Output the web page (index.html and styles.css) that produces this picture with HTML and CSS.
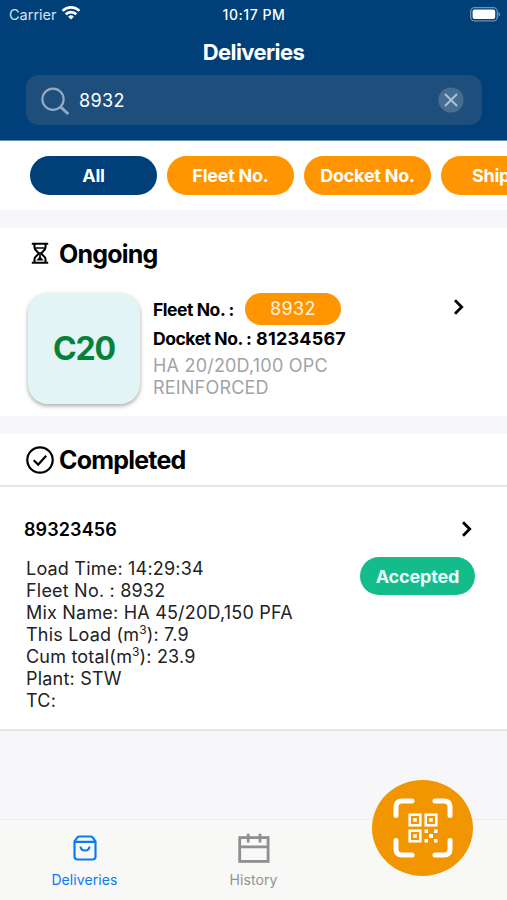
FILE: index.html
```html
<!DOCTYPE html>
<html lang="en">
<head>
<meta charset="utf-8">
<title>Deliveries</title>
<link rel="stylesheet" href="styles.css">
</head>
<body>
<div class="app">
  <header class="header">
    <div class="status">
      <div class="carrier"><span>Carrier</span>
        <svg width="20" height="16" viewBox="0 0 20 16" fill="none" stroke="#fff" stroke-width="2.7"><path d="M1.600 5.900a12 12 0 0 1 16.800 0M4.700 9.200a7.600 7.600 0 0 1 10.600 0"/><path d="M10 14.600 7.100 11.700a4.100 4.100 0 0 1 5.800 0z" fill="#fff" stroke="none"/></svg>
      </div>
      <div class="clock">10:17 PM</div>
      <svg class="battery" width="31" height="15" viewBox="0 0 31 15"><rect x=".7" y=".7" width="26.6" height="13.2" rx="4" fill="none" stroke="#6f93b5" stroke-width="1.3"/><rect x="2.6" y="2.6" width="22.6" height="9.4" rx="2" fill="#fff"/><path d="M28.500 4.800q3.200 2.500 0 5z" fill="#6f93b5"/></svg>
    </div>
    <h1 class="title">Deliveries</h1>
    <div class="search">
      <svg class="glass" width="29" height="29" viewBox="0 0 29 29" fill="none" stroke="#94aac3" stroke-width="2.2"><circle cx="12" cy="12.3" r="10.6"/><path d="m19.700 20 7.600 7" stroke-width="3"/></svg>
      <span class="query">8932</span>
      <svg class="clear" width="26" height="26" viewBox="0 0 26 26"><circle cx="13" cy="13" r="12.6" fill="#486d93"/><path d="m7 7 12 12M19 7 7 19" stroke="#b0c0d2" stroke-width="2"/></svg>
    </div>
  </header>

  <nav class="filters">
    <span class="pill active">All</span>
    <span class="pill">Fleet No.</span>
    <span class="pill">Docket No.</span>
    <span class="pill ship">Ship</span>
  </nav>

  <section class="ongoing">
    <h2 class="section-title">
      <svg class="hourglass" width="18" height="23" viewBox="0 0 18 23" fill="none" stroke="#000" stroke-width="2.1"><path d="M.8 1.800h16.400M.8 20.800h16.400M3.500 2v3.600c0 2.700 4 4.100 4 5.800s-4 3-4 5.700v3.500M14.500 2v3.600c0 2.700-4 4.100-4 5.800s4 3 4 5.700v3.500"/><path d="M4.300 6h9.400M9 10v5" stroke-width="1.600"/><path d="m5.400 18.500 3.600-4.300 3.600 4.300z" fill="#000" stroke="none"/></svg>
      <span>Ongoing</span>
    </h2>
    <div class="delivery">
      <div class="grade">C20</div>
      <div class="info">
        <div class="row"><span class="strong fleet">Fleet No. :</span><span class="tag">8932</span></div>
        <div class="strong docket">Docket No. : <span class="number">81234567</span></div>
        <div class="mix"><div>HA 20/20D,100 OPC</div><div>REINFORCED</div></div>
      </div>
      <svg class="chevron" width="12" height="18" viewBox="0 0 12 18" fill="none" stroke="#000" stroke-width="2.8"><path d="m2 2.200 6.700 6.800L2 15.800"/></svg>
    </div>
  </section>

  <section class="completed">
    <h2 class="section-title">
      <svg width="28" height="28" viewBox="0 0 28 28" fill="none" stroke="#000" stroke-width="2.200"><circle cx="14" cy="14" r="12.7"/><path d="m7.700 14.200 4.500 4.400 8-8.800"/></svg>
      <span>Completed</span>
    </h2>
    <article class="record">
      <div class="record-head"><h3>89323456</h3>
        <svg width="12" height="18" viewBox="0 0 12 18" fill="none" stroke="#000" stroke-width="2.8"><path d="m2 2.200 6.700 6.800L2 15.800"/></svg>
      </div>
      <div class="record-body">
        <ul class="details">
          <li>Load Time: 14:29:34</li>
          <li>Fleet No. : 8932</li>
          <li>Mix Name: HA 45/20D,150 PFA</li>
          <li>This Load (m<sup>3</sup>): 7.9</li>
          <li>Cum total(m<sup>3</sup>): 23.9</li>
          <li>Plant: STW</li>
          <li>TC:</li>
        </ul>
        <span class="accepted">Accepted</span>
      </div>
    </article>
  </section>

  <footer class="tabs">
    <div class="tab selected">
      <svg width="32" height="32" viewBox="0 0 32 32" fill="none" stroke="#087bf5" stroke-width="2.200"><path d="M5.500 9.400 8.600 5.200Q9.200 4.500 10 4.500h12q.8 0 1.400.7l3.100 4.200V24.500q0 3-3 3h-15q-3 0-3-3zM5.500 9.800h21M11.500 14.500c.4 5.300 8.600 5.300 9 0"/></svg>
      <span>Deliveries</span>
    </div>
    <div class="tab">
      <svg width="32" height="32" viewBox="0 0 32 32" fill="none" stroke="#8e8f90" stroke-width="2.8"><rect x="1.7" y="5.6" width="28.4" height="23.8"/><path d="M1.700 14.900h28.400M10.200 1.800v8.600M22 1.800v8.600"/></svg>
      <span>History</span>
    </div>
  </footer>
  <div class="scan">
    <svg width="60" height="60" viewBox="0 0 60 60" fill="none" stroke="#fff"><path d="M3 17.500V9q0-6 6-6h10M42 3h9q6 0 6 6v8.500M57 42.500v8.500q0 6-6 6h-9M19 57H9q-6 0-6-6v-8.500" stroke-width="5" stroke-linecap="round"/><g stroke-width="2.500"><rect x="16.700" y="16.700" width="10.600" height="10.600"/><rect x="32.700" y="16.700" width="10.600" height="10.600"/><rect x="16.700" y="32.700" width="10.600" height="10.600"/></g><path fill="#fff" stroke="none" d="M20.200 20.200h3.600v3.600h-3.600zM36.200 20.200h3.600v3.600h-3.600zM20.200 36.200h3.600v3.600h-3.600zM31.500 31.500h3.500v3.500h-3.500zM41 31.500h3.500v3.500H41zM36 36h4v4h-4zM31.500 41h3.500v3.500h-3.500zM41 41h3.500v3.500H41z"/></svg>
  </div>
</div>
</body>
</html>
```
FILE: styles.css
```css
* { box-sizing: border-box; margin: 0; padding: 0; }
body { font-family: Inter, "Liberation Sans", sans-serif; background: #f7f7fa; color: #000; overflow: hidden; }
svg { display: block; flex: none; }
.app { position: relative; width: 507px; height: 900px; display: flex; flex-direction: column; overflow: hidden; white-space: nowrap; }

.header { height: 141px; flex: none; background: #003f78; color: #fff; border-bottom: 1px solid #6c91b6; }
.status { height: 28px; display: grid; grid-template-columns: 1fr auto 1fr; align-items: center; padding: 0 8px 0 9px; font-size: 14.5px; }
.carrier { display: flex; align-items: center; gap: 5px; color: #d5e3ef; }
.carrier svg { margin: -2px 0 0 -1px; }
.clock { font-weight: 500; font-size: 14px; letter-spacing: .55px; }
.battery { justify-self: end; margin: 0 -2px 0 0; }
.title { height: 47px; line-height: 48px; text-align: center; font-size: 22px; font-weight: 700; letter-spacing: -.6px; }
.search { height: 50px; margin: 0 25px 0 26px; padding: 0 18px 0 14px; display: flex; align-items: center; border-radius: 13px; background: #1e4e7c; }
.glass { margin: 2px 0 0 1px; }
.query { margin-left: 9px; font-size: 18px; letter-spacing: .4px; }
.clear { margin-left: auto; }

.filters { height: 69px; flex: none; padding: 15px 0 0 30px; display: flex; gap: 10px; background: #fff; }
.pill { flex: none; width: 127px; height: 39px; line-height: 39px; border-radius: 20px; background: #ff9500; color: #fff; text-align: center; font-size: 18px; font-weight: 700; letter-spacing: -.25px; }
.pill.active { background: #003f78; }
.ship { padding-left: 31px; text-align: left; }

.ongoing { height: 188px; margin-top: 18px; flex: none; background: #fff; }
.section-title { display: flex; align-items: center; gap: 5px; height: 51px; padding-left: 26px; font-size: 25px; font-weight: 700; letter-spacing: -.8px; }
.ongoing .section-title { padding-left: 31px; gap: 10px; }
.delivery { display: flex; padding: 14px 42px 0 28px; }
.grade { width: 112px; height: 111px; line-height: 112px; border-radius: 20px; background: #e2f4f5; box-shadow: 0 2px 4px rgba(0,0,0,.34); color: #078139; text-align: center; font-size: 32px; font-weight: 700; letter-spacing: -1.2px; }
.info { margin-left: 13px; flex: 1; }
.row { height: 32px; display: flex; align-items: center; }
.fleet { width: 92px; }
.strong { font-size: 17.5px; font-weight: 700; letter-spacing: -.45px; }
.number { margin-left: 1px; font-size: 18px; letter-spacing: .2px; }
.tag { width: 96px; height: 32px; line-height: 32px; border-radius: 16px; background: #ff9500; color: #fff3df; text-align: center; font-size: 18px; letter-spacing: .4px; }
.docket { height: 28px; line-height: 28px; }
.mix { padding-top: 2px; color: #a2a3a7; font-size: 18px; line-height: 22px; letter-spacing: .2px; }
.chevron { margin-top: 5px; }

.completed { margin-top: 18px; flex: none; background: #fff; }
.completed .section-title { height: 53px; padding-top: 1px; border-bottom: 2px solid #e5e5e5; }
.record { height: 244px; padding: 32px 32px 0 24px; border-bottom: 2px solid #e5e5e8; }
.record-head { height: 20px; padding-right: 2px; display: flex; justify-content: space-between; align-items: center; }
.record-head h3 { font-size: 18px; line-height: 20px; padding-top: 1px; font-weight: 600; letter-spacing: .1px; }
.record-body { display: flex; justify-content: space-between; padding: 18px 0 0 2px; }
.details { list-style: none; padding-top: 1px; font-size: 18px; line-height: 22px; letter-spacing: .2px; color: #222; }
.details sup { font-size: 12px; line-height: 0; vertical-align: 7px; letter-spacing: 0; }
.accepted { width: 115px; height: 38px; line-height: 39px; border-radius: 19px; background: #14bc8c; color: #e9fff9; text-align: center; font-size: 18px; font-weight: 700; letter-spacing: -.15px; }

.tabs { margin-top: auto; height: 81px; flex: none; border-top: 1px solid #eaebec; background: #f8f8f7; display: grid; grid-template-columns: repeat(3, 169px); }
.tab { display: flex; flex-direction: column; align-items: center; padding-top: 12px; gap: 5px; color: #929294; font-size: 14px; line-height: 22px; letter-spacing: .1px; }
.selected { color: #087bf5; }
.scan { position: absolute; left: 372px; top: 780px; width: 101px; height: 96px; border-radius: 50%; background: #f19600; display: flex; align-items: center; justify-content: center; }
```
